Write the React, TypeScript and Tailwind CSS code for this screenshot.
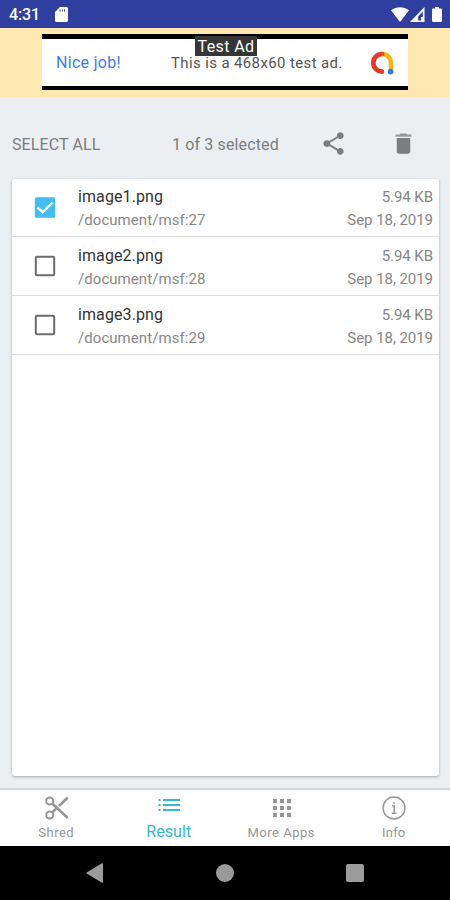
import React, { useState } from 'react';

interface FileItem {
  name: string;
  path: string;
  size: string;
  date: string;
}

const FILES: FileItem[] = [
  { name: 'image1.png', path: '/document/msf:27', size: '5.94 KB', date: 'Sep 18, 2019' },
  { name: 'image2.png', path: '/document/msf:28', size: '5.94 KB', date: 'Sep 18, 2019' },
  { name: 'image3.png', path: '/document/msf:29', size: '5.94 KB', date: 'Sep 18, 2019' },
];

function StatusBar() {
  return (
    <div className="h-7 shrink-0 bg-[#303f9f] flex items-center justify-between pl-[9px] pr-[8px] text-white">
      <div className="flex items-center">
        <span className="w-[46px] text-[16px] leading-7 font-medium tracking-[-0.1px] pt-0.5">4:31</span>
        <svg className="w-[13px] h-[15px]" viewBox="0 0 13 15" fill="currentColor">
          <path fillRule="evenodd" d="M5 0h6.5C12.4 0 13 .6 13 1.500v12c0 .9-.6 1.500-1.500 1.500h-10C.6 15 0 14.400 0 13.500V5zM4.600 2.500v2h1v-2zm2.200 0v2h1v-2zm2.200 0v2h1v-2z" />
        </svg>
      </div>
      <div className="flex items-center gap-[1px]">
        <svg className="w-[18px] h-[15px]" viewBox="0 0 18 15" fill="currentColor">
          <path d="M0 3.200C5.300-.9 12.700-.9 18 3.200L9 15z" />
        </svg>
        <svg className="w-[15px] h-[15px]" viewBox="0 0 15 15">
          <path fill="currentColor" fillRule="evenodd" d="M14.500 0v15H0zM12.800 4.500 8.200 9.200v4.200h2.800v-3.400h1.800z" />
        </svg>
        <svg className="ml-[6px] w-[10px] h-[15px]" viewBox="0 0 10 15" fill="currentColor">
          <path d="M3 0h4v1.500h1.800c.7 0 1.200.5 1.200 1.200v11.100c0 .7-.5 1.200-1.200 1.200H1.200C.5 15 0 14.500 0 13.800V2.700c0-.7.5-1.200 1.200-1.200H3z" />
        </svg>
      </div>
    </div>
  );
}

function AdBanner() {
  return (
    <div className="h-[69px] shrink-0 bg-[#ffe9b0] pt-1.5 flex justify-center">
      <div className="relative w-[366px] h-[56px] bg-white border-t-[5px] border-b-4 border-black flex items-center">
        <span className="ml-[14px] w-[115px] text-[16px] tracking-[0.3px] text-[#3b7ded]">Nice job!</span>
        <span className="w-[198px] pt-px whitespace-nowrap text-[15px] tracking-[0.37px] text-[#555]">This is a 468x60 test ad.</span>
        <svg className="w-[26px] h-6" viewBox="0 0 26 24" fill="none" strokeWidth="4.600" strokeLinecap="round">
          <path stroke="#fbb414" d="M13.500 3A8.600 8.600 0 0 1 22 11.500v6" />
          <path stroke="#e5372c" d="M13.200 3a8.800 8.800 0 0 0-.2 17.600" />
          <path stroke="#f05a28" strokeLinecap="butt" d="M13 3h1.400" />
          <circle cx="21.600" cy="20.600" r="2.900" fill="#2f7de1" />
        </svg>
        <div className="absolute left-[153px] -top-[3px] w-[62px] h-[20px] bg-[#363636] text-white text-[16px] leading-[21px] tracking-[0.4px] text-center whitespace-nowrap">
          Test Ad
        </div>
      </div>
    </div>
  );
}

function Toolbar({ selected, total, onSelectAll }: { selected: number; total: number; onSelectAll: () => void }) {
  return (
    <div className="h-[82px] shrink-0 flex items-center pl-3 pt-[13px] text-[#7b7d7f]">
      <button onClick={onSelectAll} className="w-40 text-left text-[16px] tracking-[0.1px]">SELECT ALL</button>
      <span className="w-[148px] text-[16px] tracking-[0.13px] whitespace-nowrap">{selected} of {total} selected</span>
      <svg className="mb-0.5 w-[27px] h-[27px]" viewBox="0 0 24 24" fill="currentColor">
        <path d="M18 16.080c-.76 0-1.440.3-1.960.77L8.910 12.700c.05-.23.09-.46.09-.7s-.04-.47-.09-.7l7.050-4.110c.54.5 1.250.81 2.040.81 1.660 0 3-1.340 3-3s-1.340-3-3-3-3 1.340-3 3c0 .24.04.47.09.7L8.040 9.810C7.500 9.310 6.790 9 6 9c-1.660 0-3 1.340-3 3s1.340 3 3 3c.79 0 1.500-.31 2.040-.81l7.120 4.160c-.05.21-.08.43-.08.65 0 1.610 1.310 2.920 2.920 2.920s2.920-1.310 2.920-2.920-1.310-2.920-2.920-2.920z" />
      </svg>
      <svg className="ml-[43px] mb-0.5 w-[27px] h-[27px]" viewBox="0 0 24 24" fill="currentColor">
        <path d="M6 19c0 1.100.9 2 2 2h8c1.100 0 2-.9 2-2V7H6v12z" />
        <path opacity=".75" d="M19 4h-3.500l-1-1h-5l-1 1H5v2h14V4z" />
      </svg>
    </div>
  );
}

function FileRow({ file, checked, onToggle }: { file: FileItem; checked: boolean; onToggle: () => void }) {
  return (
    <div onClick={onToggle} className="h-[59px] pt-px first:h-[58px] first:pt-0 flex items-start border-b border-[#dedede] pl-[22px] pr-[6px] cursor-pointer">
      {checked ? (
        <svg className="mt-[17px] w-[22px] h-[22px]" viewBox="0 0 22 22">
          <rect x=".8" y="1.300" width="20.400" height="20.400" rx="1.500" fill="#44bdf3" />
          <path d="M3.500 11.500 8.700 16.200 18.500 6.500" fill="none" stroke="#fff" strokeWidth="2.400" />
        </svg>
      ) : (
        <svg className="mt-[17px] w-[22px] h-[22px]" viewBox="0 0 22 22">
          <rect x="1.800" y="1.800" width="18.400" height="18.400" rx="1" fill="none" stroke="#6c6c6c" strokeWidth="2" />
        </svg>
      )}
      <div className="ml-[22px] mt-[6px] flex-1">
        <div className="text-[16px] leading-6 tracking-[0.1px] text-[#333]">{file.name}</div>
        <div className="text-[15px] leading-[23px] tracking-[0.06px] text-[#888]">{file.path}</div>
      </div>
      <div className="mt-[6px] text-right text-[15px] tracking-[-0.05px] text-[#858585]">
        <div className="leading-6">{file.size}</div>
        <div className="leading-[23px]">{file.date}</div>
      </div>
    </div>
  );
}

function BottomNav() {
  return (
    <div className="h-[58px] shrink-0 bg-white border-t-2 border-[#d3d6d8] grid grid-cols-4 text-[#969696] text-[13px]">
      <div className="flex flex-col items-center pt-[6px]">
        <svg className="ml-px w-6 h-6" viewBox="0 0 24 24" fill="none" stroke="currentColor" strokeWidth="2">
          <circle cx="4.700" cy="5" r="3.500" />
          <circle cx="4.700" cy="19" r="3.500" />
          <path strokeWidth="2.600" d="M7 7.300 22.700 22M7 16.700l4-3.800M14 10l8.700-8.500" />
        </svg>
        <span className="mt-[4px] leading-[17px] tracking-[0.5px]">Shred</span>
      </div>
      <div className="flex flex-col items-center pt-[6px] text-[#35b9ce]">
        <svg className="w-6 h-6" viewBox="0 0 24 24" fill="currentColor">
          <path d="M1.500 3h2v2h-2zM1.500 8h2v2h-2zM1.500 13h2v2h-2zM6 3h17v2H6zM6 8h17v2H6zM6 13h17v2H6z" />
        </svg>
        <span className="mt-[3px] text-[16px] leading-[18px] tracking-[0.1px]">Result</span>
      </div>
      <div className="flex flex-col items-center pt-[6px]">
        <svg className="ml-px w-6 h-6" viewBox="0 0 24 24" fill="currentColor">
          <path d="M3 3h4v4H3zM10 3h4v4h-4zM17 3h4v4h-4zM3 10h4v4H3zM10 10h4v4h-4zM17 10h4v4h-4zM3 17h4v4H3zM10 17h4v4h-4zM17 17h4v4h-4z" />
        </svg>
        <span className="mt-[4px] leading-[17px] tracking-[0.5px]">More Apps</span>
      </div>
      <div className="flex flex-col items-center pt-[6px]">
        <svg className="ml-px w-6 h-6" viewBox="0 0 24 24" fill="none" stroke="currentColor" strokeWidth="1.500">
          <circle cx="12" cy="12" r="10.900" />
          <path d="M10 10h2.300v7M9.800 17.200h4.700M11.200 7h1.600" />
        </svg>
        <span className="mt-[4px] leading-[17px] tracking-[0.2px]">Info</span>
      </div>
    </div>
  );
}

export default function App() {
  const [checked, setChecked] = useState<boolean[]>([true, false, false]);

  const toggle = (index: number) => {
    setChecked(checked.map((c, i) => (i === index ? !c : c)));
  };

  return (
    <div className="w-[450px] h-[900px] overflow-hidden flex flex-col bg-[#ebeff2] font-[Roboto,sans-serif]">
      <StatusBar />
      <AdBanner />
      <Toolbar
        selected={checked.filter(Boolean).length}
        total={FILES.length}
        onSelectAll={() => setChecked(FILES.map(() => true))}
      />

      {/* File list */}
      <div className="flex-1 ml-3 mr-[11px] mb-3 bg-white rounded-[3px] shadow-[0_1px_3px_rgba(0,0,0,0.3)]">
        {FILES.map((file, i) => (
          <FileRow key={file.path} file={file} checked={checked[i]} onToggle={() => toggle(i)} />
        ))}
      </div>

      <BottomNav />

      {/* Android navigation keys */}
      <div className="h-[54px] shrink-0 bg-black flex items-center justify-between pl-[86px] pr-[86px] text-[#9b9b9b]">
        <svg className="w-[17px] h-5" viewBox="0 0 17 20" fill="currentColor">
          <path d="M16 .3c.6-.3 1 0 1 .6v18.200c0 .6-.4.9-1 .6L.6 10.600c-.5-.3-.5-.9 0-1.200z" />
        </svg>
        <div className="size-[18px] rounded-full bg-current" />
        <div className="size-[18px] rounded-[2px] bg-current" />
      </div>
    </div>
  );
}
